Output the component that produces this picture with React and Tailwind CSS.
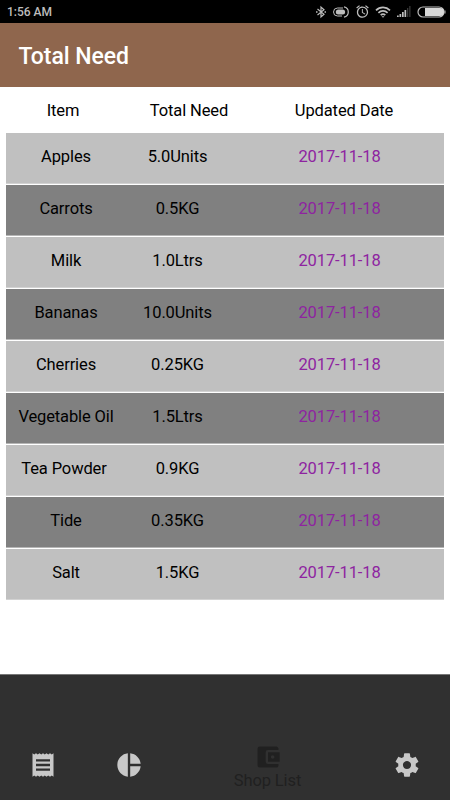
import React from 'react';
import { MdPieChart, MdAccountBalanceWallet, MdAlarm } from 'react-icons/md';

const rows = [
  ['Apples', '5.0Units'],
  ['Carrots', '0.5KG'],
  ['Milk', '1.0Ltrs'],
  ['Bananas', '10.0Units'],
  ['Cherries', '0.25KG'],
  ['Vegetable Oil', '1.5Ltrs'],
  ['Tea Powder', '0.9KG'],
  ['Tide', '0.35KG'],
  ['Salt', '1.5KG'],
];

function BluetoothIcon() {
  return (
    <svg width="12" height="14" viewBox="0 0 12 14" fill="none" stroke="currentColor" strokeWidth="1.2">
      <path d="M2.5 4 9 9.3 6 12V2l3 2.7L2.5 10" />
      <path d="M1 7h1.5M9.500 7H11" strokeWidth="1.6" />
    </svg>
  );
}

function DataIcon() {
  return (
    <svg width="19" height="14" viewBox="0 0 19 14" fill="none" stroke="currentColor">
      <path d="M11 3H5.500a4 4 0 0 0 0 8H10" />
      <rect x="3.800" y="4.500" width="9.300" height="5" rx="2.500" fill="currentColor" stroke="none" />
      <path d="M12 1.800a5.300 5.300 0 0 1 0 10.400" strokeWidth="1.200" />
    </svg>
  );
}

function WifiIcon() {
  return (
    <svg width="16" height="14" viewBox="0 0 16 14" fill="none" stroke="currentColor" strokeWidth="1.700">
      <path d="M1 5.300a10 10 0 0 1 14 0M3.400 7.800a6.600 6.600 0 0 1 9.200 0M5.700 10.200a3.400 3.400 0 0 1 4.600 0" />
      <path d="M6.500 11.300h3L8 12.800z" fill="currentColor" stroke="none" />
    </svg>
  );
}

function SignalIcon() {
  return (
    <svg width="14" height="12" viewBox="0 0 14 12" fill="currentColor">
      <path d="M0 9.500h1.700V11H0zM2.500 8h1.700v3H2.500zM5 6h1.700v5H5zM7.500 4h1.700v7H7.500z" />
      <path d="M10 2h1.300v9H10zM12.200 0h1.300v11h-1.300z" fill="#383838" />
    </svg>
  );
}

function BatteryIcon() {
  return (
    <svg width="29" height="12" viewBox="0 0 29 12" fill="none" stroke="currentColor">
      <rect x="1" y="1" width="26" height="10" rx="5" strokeWidth="1.200" />
      <path d="M8 2h15a4 4 0 0 1 0 8H8z" fill="#d8d8d8" stroke="none" />
      <path d="M28 4.500v3" />
    </svg>
  );
}

function ReceiptIcon() {
  return (
    <svg width="28" height="28" viewBox="0 0 24 24" fill="currentColor">
      <path d="M18 17H6v-2h12v2zm0-4H6v-2h12v2zm0-4H6V7h12v2zM3 22l1.500-1.100L6 22l1.500-1.100L9 22l1.500-1.100L12 22l1.500-1.100L15 22l1.500-1.100L18 22l1.500-1.100L21 22V2l-1.500 1.100L18 2l-1.500 1.100L15 2l-1.500 1.100L12 2l-1.500 1.100L9 2 7.500 3.100 6 2 4.500 3.100 3 2v20z" />
    </svg>
  );
}

function GearIcon() {
  return (
    <svg width="28" height="28" viewBox="0 0 24 24" fill="currentColor">
      <path d="M19.43 12.98c.04-.32.07-.64.07-.98s-.03-.66-.07-.98l2.11-1.65c.19-.15.24-.42.12-.64l-2-3.46c-.12-.22-.39-.3-.61-.22l-2.49 1c-.52-.4-1.08-.73-1.69-.98l-.38-2.65C14.46 2.18 14.25 2 14 2h-4c-.25 0-.46.18-.49.42l-.38 2.65c-.61.25-1.17.59-1.69.98l-2.49-1c-.23-.09-.49 0-.61.22l-2 3.46c-.13.22-.07.49.12.64l2.11 1.65c-.04.32-.07.65-.07.98s.03.66.07.98l-2.11 1.65c-.19.15-.24.42-.12.64l2 3.46c.12.22.39.3.61.22l2.49-1c.52.4 1.08.73 1.69.98l.38 2.65c.03.24.24.42.49.42h4c.25 0 .46-.18.49-.42l.38-2.65c.61-.25 1.17-.59 1.69-.98l2.49 1c.23.09.49 0 .61-.22l2-3.46c.12-.22.07-.49-.12-.64l-2.11-1.65zM12 15.500c-1.930 0-3.500-1.570-3.500-3.500s1.570-3.500 3.500-3.500 3.500 1.570 3.500 3.500-1.570 3.500-3.500 3.500z" />
    </svg>
  );
}

export default function App() {
  return (
    <div className="flex h-[800px] w-[450px] flex-col overflow-hidden bg-white font-['Roboto',sans-serif] text-black">
      <div className="flex h-[23px] shrink-0 items-center justify-between bg-black pl-[7px] pr-[4px] text-[#bdbdbd]">
        <span className="text-[12px] font-medium">1:56 AM</span>
        <div className="flex items-center">
          <BluetoothIcon />
          <div className="ml-[5px]"><DataIcon /></div>
          <MdAlarm className="ml-[4px] size-[15px]" />
          <div className="ml-[5px]"><WifiIcon /></div>
          <div className="ml-[6px]"><SignalIcon /></div>
          <div className="ml-[6px]"><BatteryIcon /></div>
        </div>
      </div>

      <header className="flex h-[64px] shrink-0 items-center bg-[#8f664d] pl-[18.5px] pt-[2px]">
        <h1 className="text-[23px] font-medium leading-none tracking-[-0.08px] text-white">Total Need</h1>
      </header>

      <main className="flex-1 px-[6px]">
        <div className="grid h-[46px] grid-cols-[114px_138px_172px] items-center pt-[3px] text-center text-[16.5px] tracking-[-0.12px]">
          <span>Item</span>
          <span>Total Need</span>
          <span>Updated Date</span>
        </div>
        <div className="flex flex-col gap-px">
          {rows.map(([item, need], i) => (
            <div
              key={item}
              className={`grid h-[51px] grid-cols-[120px_103px_221px] items-center border-b pb-[1px] text-center text-[16.5px] tracking-[-0.12px] ${
                i % 2 ? 'border-[#b5b5b5] bg-[#808080]' : 'border-[#d2d2d2] bg-[#c0c0c0]'
              }`}
            >
              <span className={item === 'Tea Powder' ? 'pr-[4px]' : ''}>{item}</span>
              <span>{need}</span>
              <span className="text-[#8e24a0]">2017-11-18</span>
            </div>
          ))}
        </div>
      </main>

      <nav className="flex h-[126px] shrink-0 items-end border-t border-[#777777] bg-[#303030] text-[#c8c8c8]">
        <div className="flex w-[86px] justify-center pb-[21px]"><ReceiptIcon /></div>
        <div className="flex w-[85px] justify-center pb-[21px]"><MdPieChart className="size-[28px]" /></div>
        <div className="flex w-[193px] flex-col items-center pb-[9px] text-[#202020]">
          <MdAccountBalanceWallet className="size-[28px]" />
          <span className="text-[16.5px] leading-[20px] tracking-[-0.12px]">Shop List</span>
        </div>
        <div className="flex w-[86px] justify-center pb-[21px]"><GearIcon /></div>
      </nav>
    </div>
  );
}
